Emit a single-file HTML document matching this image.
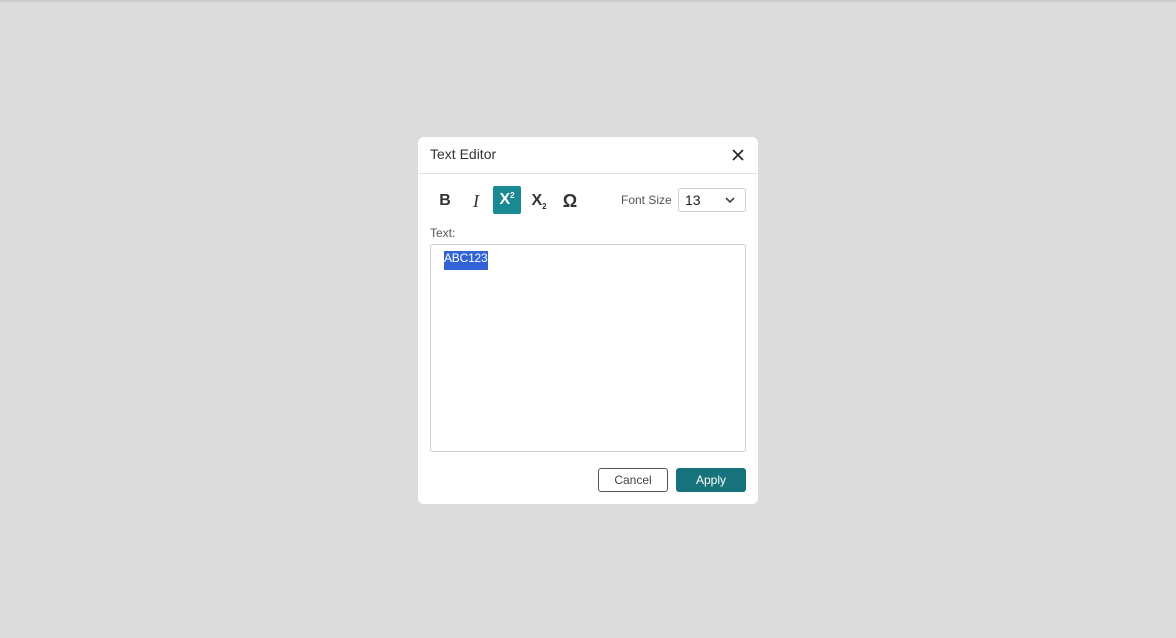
<!DOCTYPE html>
<html><head><style>
body{margin:0;width:1176px;height:638px;background:#dcdcdc;font-family:"Liberation Sans",sans-serif;position:relative;overflow:hidden}
.top{position:absolute;left:0;top:0;width:1176px;height:2px;background:#ccc}
.dlg{position:absolute;left:418px;top:137px;width:340px;height:367px;background:#fff;border-radius:6px}
.hdr{height:36px;border-bottom:1px solid #dde3ea;position:relative}
.hdr span{position:absolute;left:12px;top:9px;font-size:14px;color:#333}
.x{position:absolute;left:314px;top:12px}
.tb{position:absolute;top:49px;width:28px;height:28px;text-align:center;line-height:30px;font-weight:bold;font-size:16px;color:#333}
.tb sup,.tb sub{line-height:0}
.act{background:#1a8a92;color:#fff;border-radius:2px}
.fs{position:absolute;left:203px;top:56px;font-size:12px;color:#555}
.sel{position:absolute;left:260px;top:51px;width:66px;height:22px;border:1px solid #c8d0da;border-radius:3px;font-size:14px;color:#222}
.lbl{position:absolute;left:12px;top:89px;font-size:12px;color:#555}
.ta{position:absolute;left:12px;top:107px;width:314px;height:206px;border:1px solid #c8d0da;border-radius:3px}
.hl{position:absolute;left:13px;top:6px;background:#3162d6;color:#fff;font-size:12px;padding:0;height:19px;line-height:15px;letter-spacing:-0.2px}
.btn{position:absolute;top:331px;height:22px;border-radius:3px;font-size:12px;text-align:center;line-height:22px}
</style></head><body>
<div class="top"></div>
<div class="dlg">
<div class="hdr"><span>Text Editor</span>
<svg class="x" width="12" height="12" viewBox="0 0 12 12"><path d="M1 1L11 11M11 1L1 11" stroke="#222" stroke-width="1.6"/></svg></div>
<div class="tb" style="left:13px">B</div>
<div class="tb" style="left:44px;font-style:italic;font-family:'Liberation Serif',serif;font-weight:normal;font-size:18px">I</div>
<div class="tb act" style="left:75px;line-height:28px">X<sup style="font-size:8px;vertical-align:6px">2</sup></div>
<div class="tb" style="left:107px">X<sub style="font-size:8px;vertical-align:-4px">2</sub></div>
<div class="tb" style="left:138px;font-size:18px">Ω</div>
<div class="fs">Font Size</div>
<div class="sel"><span style="position:absolute;left:6px;top:3px">13</span>
<svg style="position:absolute;left:46px;top:8px" width="10" height="7" viewBox="0 0 10 7"><path d="M1 1L5 5L9 1" stroke="#444" stroke-width="1.6" fill="none"/></svg></div>
<div class="lbl">Text:</div>
<div class="ta"><div class="hl">ABC123</div></div>
<div class="btn" style="left:180px;width:68px;border:1px solid #555;color:#444;height:22px;line-height:22px">Cancel</div>
<div class="btn" style="left:258px;width:70px;background:#17737b;color:#fff;height:24px;line-height:24px;top:331px">Apply</div>
</div>
</body></html>
